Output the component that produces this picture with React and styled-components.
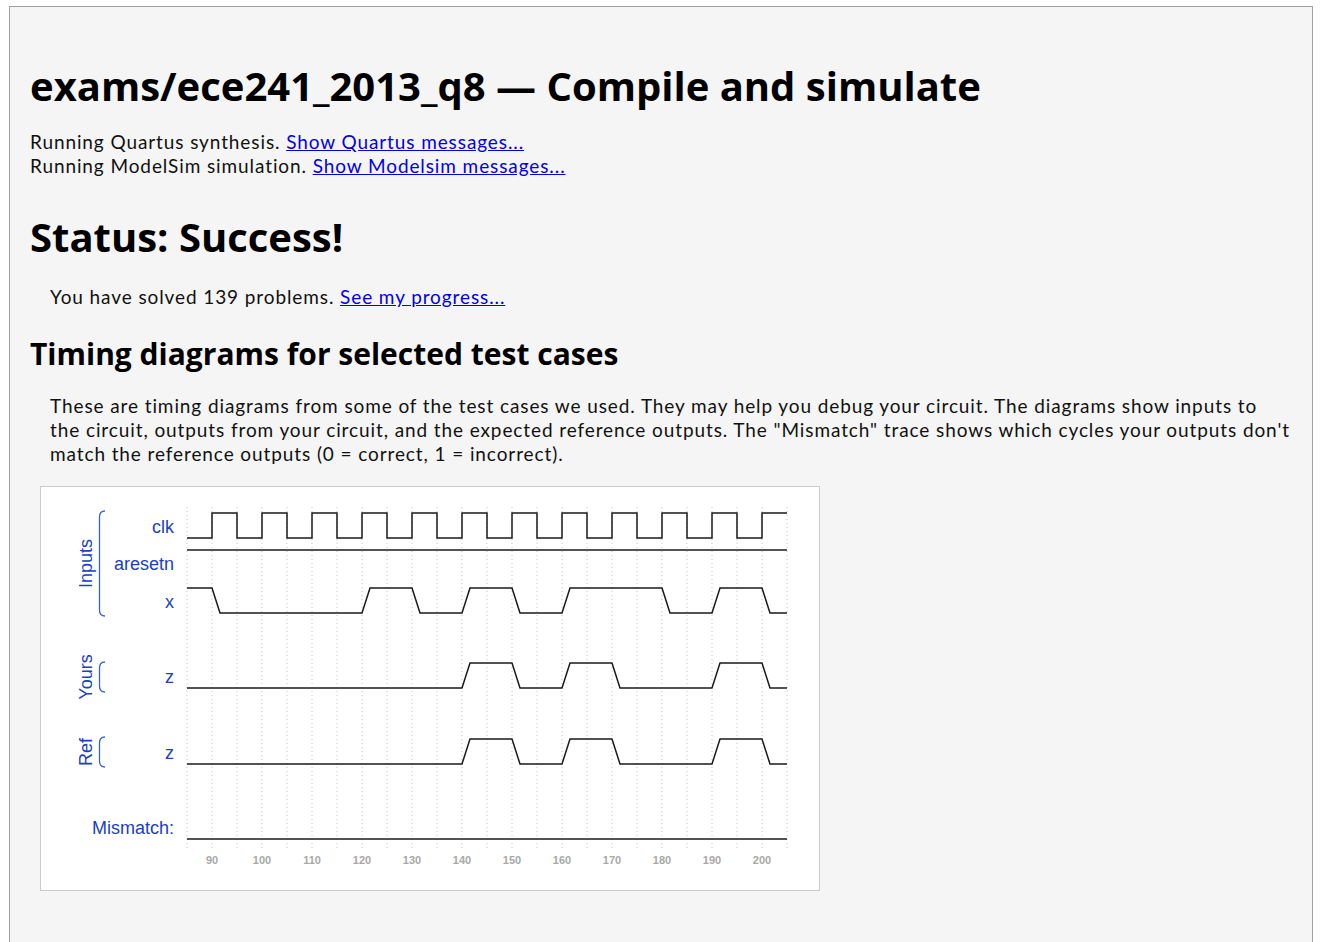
import React from 'react';
import styled, { createGlobalStyle } from 'styled-components';

const GlobalStyle = createGlobalStyle`
	body {
		margin: 0;
		background: #ffffff;
		font-family: 'Lato', 'Liberation Sans', sans-serif;
		color: #111111;
	}
`;

const Pagina = styled.div`
	margin: 6px 8px 0 9px;
	min-height: 100vh;
	box-sizing: border-box;
	background: #f5f5f5;
	border: 1px solid #a0a0a0;
	border-bottom: none;
	padding: 0 20px 40px 20px;
`;

const Titulo = styled.h1`
	font-family: 'Open Sans', sans-serif;
	font-weight: bold;
	font-size: 40px;
	line-height: 52px;
	margin: 53px 0 18px 0;
	color: #000000;
`;

const Estado = styled.h2`
	font-family: 'Open Sans', sans-serif;
	font-weight: bold;
	font-size: 40px;
	line-height: 52px;
	margin: 33px 0 0 0;
	color: #000000;
`;

const Subtitulo = styled.h3`
	font-family: 'Open Sans', sans-serif;
	font-weight: bold;
	font-size: 30px;
	line-height: 38px;
	margin: 26px 0 0 0;
	color: #000000;
`;

const Texto = styled.div`
	font-size: 19px;
	letter-spacing: 0.9px;
	line-height: 24px;
	margin: ${(p) => p.$top || 0}px 0 0 ${(p) => (p.$sangria ? 20 : 0)}px;

	a {
		color: #0000ee;
		text-decoration: underline;
	}
`;

const CajaDiagrama = styled.div`
	margin: 20px 0 0 10px;
	width: 778px;
	height: 403px;
	background: #ffffff;
	border: 1px solid #cccccc;

	svg {
		display: block;
	}
`;

// tiempo 85 -> x=187, 5px por unidad
const tx = (t) => 187 + (t - 85) * 5;
const RAMPA = 8;

const senalReloj = (alto) => {
	let d = `M${tx(85)},${alto + 25}`;
	let nivel = 0;
	for (let t = 90; t <= 200; t += 5) {
		const y = nivel ? alto + 25 : alto;
		d += ` L${tx(t)},${nivel ? alto : alto + 25} L${tx(t)},${y}`;
		nivel = 1 - nivel;
	}
	d += ` L${tx(205)},${nivel ? alto : alto + 25}`;
	return d;
};

const senalRampa = (alto, inicial, cambios) => {
	const nivelY = (v) => (v ? alto : alto + 25);
	let v = inicial;
	let d = `M${tx(85)},${nivelY(v)}`;
	cambios.forEach((t) => {
		d += ` L${tx(t)},${nivelY(v)}`;
		v = 1 - v;
		d += ` L${tx(t) + RAMPA},${nivelY(v)}`;
	});
	d += ` L${tx(205)},${nivelY(v)}`;
	return d;
};

const filas = [
	{ nombre: 'clk', alto: 513, d: senalReloj(513) },
	{ nombre: 'aresetn', alto: 550, d: `M${tx(85)},550 L${tx(205)},550` },
	{ nombre: 'x', alto: 588, d: senalRampa(588, 1, [90, 120, 130, 140, 150, 160, 180, 190, 200]) },
	{ nombre: 'z', alto: 663, d: senalRampa(663, 0, [140, 150, 160, 170, 190, 200]) },
	{ nombre: 'z', alto: 739, d: senalRampa(739, 0, [140, 150, 160, 170, 190, 200]) },
	{ nombre: 'Mismatch:', alto: 814, d: `M${tx(85)},839 L${tx(205)},839` },
];

const grupos = [
	{ nombre: 'Inputs', y1: 511, y2: 616 },
	{ nombre: 'Yours', y1: 662, y2: 692 },
	{ nombre: 'Ref', y1: 737, y2: 767 },
];

const AZUL = '#2040c0';
const FUENTE_DIAGRAMA = 'Liberation Sans, Arial, sans-serif';

const Diagrama = () => {
	const rejilla = [];
	for (let t = 85; t <= 205; t += 5) rejilla.push(tx(t));
	const marcas = [];
	for (let t = 90; t <= 200; t += 10) marcas.push(t);

	return (
		<CajaDiagrama>
			<svg width="778" height="403" viewBox="41 487 778 403">
				{rejilla.map((x) => (
					<line key={x} x1={x} y1={507} x2={x} y2={848} stroke="#c4c4c4" strokeDasharray="1 3" />
				))}
				{filas.map((f, i) => (
					<g key={i}>
						<text x={174} y={f.alto + 20} textAnchor="end" fill={AZUL} fontFamily={FUENTE_DIAGRAMA} fontSize="18">
							{f.nombre}
						</text>
						<path d={f.d} fill="none" stroke="#1a1a1a" strokeWidth="1.5" />
					</g>
				))}
				{grupos.map((g) => {
					const medio = (g.y1 + g.y2) / 2;
					return (
						<g key={g.nombre}>
							<path
								d={`M105,${g.y1} Q99.5,${g.y1} 99.5,${g.y1 + 6} L99.5,${g.y2 - 6} Q99.5,${g.y2} 105,${g.y2}`}
								fill="none"
								stroke="#3b63c9"
								strokeWidth="1.3"
							/>
							<text
								x={0}
								y={0}
								transform={`translate(92,${medio}) rotate(-90)`}
								textAnchor="middle"
								fill={AZUL}
								fontFamily={FUENTE_DIAGRAMA}
								fontSize="18"
							>
								{g.nombre}
							</text>
						</g>
					);
				})}
				{marcas.map((t) => (
					<text key={t} x={tx(t)} y={864} textAnchor="middle" fill="#a8a8a8" fontFamily={FUENTE_DIAGRAMA} fontSize="11" fontWeight="bold">
						{t}
					</text>
				))}
			</svg>
		</CajaDiagrama>
	);
};

const App = () => (
	<>
		<GlobalStyle />
		<Pagina>
			<Titulo>exams/ece241_2013_q8 — Compile and simulate</Titulo>
			<Texto>
				Running Quartus synthesis. <a href="#">Show Quartus messages...</a>
				<br />
				Running ModelSim simulation. <a href="#">Show Modelsim messages...</a>
			</Texto>
			<Estado>Status: Success!</Estado>
			<Texto $top={22} $sangria>
				You have solved 139 problems. <a href="#">See my progress...</a>
			</Texto>
			<Subtitulo>Timing diagrams for selected test cases</Subtitulo>
			<Texto $top={21} $sangria>
				These are timing diagrams from some of the test cases we used. They may help you debug your circuit. The
				diagrams show inputs to the circuit, outputs from your circuit, and the expected reference outputs. The
				"Mismatch" trace shows which cycles your outputs don't match the reference outputs (0 = correct, 1 =
				incorrect).
			</Texto>
			<Diagrama />
		</Pagina>
	</>
);

export default App;
